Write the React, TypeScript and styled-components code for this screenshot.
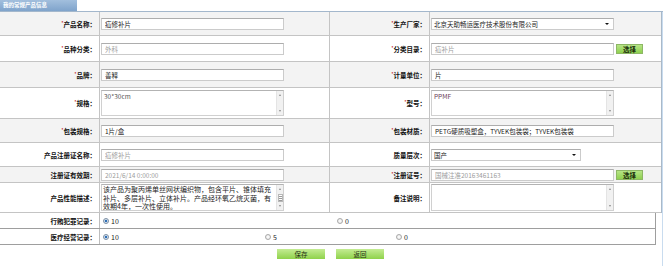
import React from "react";
import styled, { createGlobalStyle } from "styled-components";

const GlobalStyle = createGlobalStyle`
  html, body {
    margin: 0;
    padding: 0;
    background: #fff;
  }
  body {
    font-family: "Noto Sans CJK SC", "Liberation Sans", sans-serif;
  }
`;

const Page = styled.div`
  width: 663px;
  height: 266px;
  overflow: hidden;
`;

const TitleBar = styled.div`
  height: 11px;
  border-bottom: 1px solid #a3b7cc;
  display: flex;
`;

const TitleTab = styled.div`
  width: 77px;
  height: 11px;
  box-sizing: border-box;
  padding-left: 3px;
  background: linear-gradient(#a2bfdd, #7fa3cb);
  color: #fff;
  font-size: 5.5px;
  font-weight: bold;
  line-height: 11px;
  white-space: nowrap;
`;

const Body = styled.div`
  width: 663px;
  height: 254px;
  box-sizing: border-box;
  border-right: 1px solid #c9dcef;
`;

const FormTable = styled.div`
  width: 662px;
  box-sizing: border-box;
  border-right: 1px solid #a9b9c9;
`;

const FormRow = styled.div<{ $h: number; $shade?: boolean }>`
  display: grid;
  grid-template-columns: 100px 230px 100px 1fr;
  height: ${(p) => p.$h}px;
  box-sizing: border-box;
  background: ${(p) => (p.$shade ? "#f3f3f3" : "#fff")};
  border-bottom: 1px solid #c4c4c4;
`;

const LabelCell = styled.div`
  display: flex;
  align-items: center;
  justify-content: flex-end;
  padding-right: 3px;
  border-right: 1px solid #c4c4c4;
  font-size: 6.5px;
  font-weight: bold;
  color: #111;
  white-space: nowrap;
`;

const Star = styled.span`
  color: #b00;
  font-size: 5px;
  font-weight: normal;
  vertical-align: 2px;
`;

const FieldCell = styled.div<{ $last?: boolean }>`
  display: flex;
  align-items: center;
  gap: 2px;
  padding-left: 1px;
  border-right: ${(p) => (p.$last ? "none" : "1px solid #c4c4c4")};
`;

const TextInput = styled.input<{ $muted?: boolean; $w?: number }>`
  width: ${(p) => p.$w ?? 183}px;
  height: 12px;
  box-sizing: border-box;
  margin: 0;
  padding: 0 3px;
  border: 1px solid #cbcbcb;
  border-top-color: #adadad;
  background: #fff;
  font-family: inherit;
  font-size: 6.5px;
  color: ${(p) => (p.$muted ? "#9c9c9c" : "#222")};
  outline: none;
`;

const SelectBox = styled.div<{ $w: number }>`
  width: ${(p) => p.$w}px;
  height: 12px;
  box-sizing: border-box;
  display: flex;
  align-items: center;
  border: 1px solid #cbcbcb;
  border-top-color: #adadad;
  background: #fff;
`;

const SelectField = styled.select`
  flex: 1;
  min-width: 0;
  height: 10px;
  margin: 0;
  padding: 0 0 0 2px;
  border: none;
  background: transparent;
  appearance: none;
  font-family: inherit;
  font-size: 6.5px;
  color: #222;
  outline: none;
`;

const Caret = styled.span`
  width: 0;
  height: 0;
  margin-right: 4px;
  border-left: 2px solid transparent;
  border-right: 2px solid transparent;
  border-top: 2px solid #111;
`;

const PickButton = styled.button`
  width: 27px;
  height: 10px;
  margin: 0;
  padding: 0;
  border: 1px solid #8db765;
  background: linear-gradient(#b6e486, #8fd050);
  font-family: inherit;
  font-size: 6.5px;
  font-weight: bold;
  line-height: 8px;
  color: #1c2f0c;
`;

const AreaBox = styled.div<{ $h: number }>`
  width: 183px;
  height: ${(p) => p.$h}px;
  box-sizing: border-box;
  display: flex;
  border: 1px solid #d0d0d0;
  border-top-color: #b3b3b3;
  background: #fff;
`;

const AreaField = styled.textarea<{ $color?: string }>`
  flex: 1;
  min-width: 0;
  margin: 0;
  padding: 1px 1px 0 2px;
  border: none;
  resize: none;
  overflow: hidden;
  background: transparent;
  font-family: inherit;
  font-size: 6.5px;
  line-height: 8.5px;
  color: ${(p) => p.$color ?? "#333"};
  outline: none;
`;

const DescField = styled(AreaField)`
  font-size: 7px;
  line-height: 8.5px;
  color: #222;
  padding: 0 1px 0 1px;
`;

const ScrollTrack = styled.div`
  width: 7px;
  display: flex;
  flex-direction: column;
  align-items: center;
  justify-content: space-between;
  padding: 3px 0;
  box-sizing: border-box;
  background: #f1f1f1;
  border-left: 1px solid #e4e4e4;
`;

const Arrow = styled.span<{ $up?: boolean }>`
  width: 0;
  height: 0;
  border-left: 1.5px solid transparent;
  border-right: 1.5px solid transparent;
  ${(p) =>
    p.$up ? "border-bottom: 2px solid #8a8a8a;" : "border-top: 2px solid #8a8a8a;"}
`;

const Thumb = styled.span`
  width: 5px;
  height: 8px;
  box-sizing: border-box;
  border: 1px solid #b8b8b8;
  background: repeating-linear-gradient(#fff 0 1px, #9a9a9a 1px 2px);
`;

const RadioTable = styled.div`
  width: 656px;
  box-sizing: border-box;
  border-right: 1px solid #9e9e9e;
`;

const RadioRow = styled.div`
  display: grid;
  grid-template-columns: 100px 1fr;
  height: 16px;
  box-sizing: border-box;
  border-bottom: 1px solid #9e9e9e;
`;

const RadioLabel = styled(LabelCell)`
  border-right-color: #bdbdbd;
`;

const Options = styled.div`
  display: flex;
  align-items: center;
  padding-left: 3px;
`;

const Option = styled.label<{ $w?: number }>`
  display: flex;
  align-items: center;
  gap: 2px;
  width: ${(p) => (p.$w ? `${p.$w}px` : "auto")};
  font-size: 7px;
  color: #222;
`;

const Radio = styled.input`
  appearance: none;
  width: 6px;
  height: 6px;
  margin: 0;
  border-radius: 50%;
  border: 1px solid #a9a9a9;
  background: radial-gradient(circle, #fff 0, #e3e3e3 100%);
  &:checked {
    border-color: #7c8fa4;
    background: radial-gradient(circle, #2d6fb8 0 1.3px, #dbe6f2 1.6px);
  }
`;

const ButtonBar = styled.div`
  display: flex;
  justify-content: center;
  gap: 11px;
  margin-top: 4px;
  padding-right: 1px;
`;

const ActionButton = styled.button`
  width: 48px;
  height: 10px;
  margin: 0;
  padding: 0;
  border: none;
  background: linear-gradient(#c4ec93, #8fd24b);
  font-family: inherit;
  font-size: 6.5px;
  line-height: 10px;
  color: #1e2a12;
`;

const Label: React.FC<{ text: string; req?: boolean }> = ({ text, req }) => (
  <LabelCell>
    <span>
      {req && <Star>*</Star>}
      {text}
    </span>
  </LabelCell>
);

const Scroll: React.FC<{ thumb?: boolean }> = ({ thumb }) => (
  <ScrollTrack>
    <Arrow $up />
    {thumb && <Thumb />}
    <Arrow />
  </ScrollTrack>
);

const desc =
  "该产品为聚丙烯单丝网状编织物，包含平片、锥体填充补片、多层补片、立体补片。产品经环氧乙烷灭菌，有效期4年，一次性使用。";

export default function App() {
  return (
    <Page>
      <GlobalStyle />
      <TitleBar>
        <TitleTab>我的常规产品信息</TitleTab>
      </TitleBar>
      <Body>
        <FormTable>
          <FormRow $h={24} $shade>
            <Label text="产品名称：" req />
            <FieldCell>
              <TextInput defaultValue="疝修补片" />
            </FieldCell>
            <Label text="生产厂家：" req />
            <FieldCell $last>
              <SelectBox $w={183}>
                <SelectField defaultValue="a">
                  <option value="a">北京天助畅运医疗技术股份有限公司</option>
                </SelectField>
                <Caret />
              </SelectBox>
            </FieldCell>
          </FormRow>
          <FormRow $h={26}>
            <Label text="品种分类：" req />
            <FieldCell>
              <TextInput $muted readOnly defaultValue="外科" />
            </FieldCell>
            <Label text="分类目录：" req />
            <FieldCell $last>
              <TextInput $muted readOnly defaultValue="疝补片" />
              <PickButton>选择</PickButton>
            </FieldCell>
          </FormRow>
          <FormRow $h={26} $shade>
            <Label text="品牌：" req />
            <FieldCell>
              <TextInput defaultValue="善释" />
            </FieldCell>
            <Label text="计量单位：" req />
            <FieldCell $last>
              <TextInput defaultValue="片" />
            </FieldCell>
          </FormRow>
          <FormRow $h={31}>
            <Label text="规格：" req />
            <FieldCell>
              <AreaBox $h={26}>
                <AreaField $color="#555" defaultValue="30*30cm" />
                <Scroll />
              </AreaBox>
            </FieldCell>
            <Label text="型号：" req />
            <FieldCell $last>
              <AreaBox $h={26}>
                <AreaField $color="#6b3d55" defaultValue="PPMF" />
                <Scroll />
              </AreaBox>
            </FieldCell>
          </FormRow>
          <FormRow $h={24} $shade>
            <Label text="包装规格：" req />
            <FieldCell>
              <TextInput defaultValue="1片/盒" />
            </FieldCell>
            <Label text="包装材质：" req />
            <FieldCell $last>
              <TextInput defaultValue="PETG硬质吸塑盒，TYVEK包装袋；TYVEK包装袋" />
            </FieldCell>
          </FormRow>
          <FormRow $h={24}>
            <Label text="产品注册证名称：" />
            <FieldCell>
              <TextInput $muted readOnly defaultValue="疝修补片" />
            </FieldCell>
            <Label text="质量层次：" />
            <FieldCell $last>
              <SelectBox $w={150}>
                <SelectField defaultValue="gc">
                  <option value="gc">国产</option>
                </SelectField>
                <Caret />
              </SelectBox>
            </FieldCell>
          </FormRow>
          <FormRow $h={16} $shade>
            <Label text="注册证有效期：" />
            <FieldCell>
              <TextInput $muted readOnly defaultValue="2021/6/14 0:00:00" />
            </FieldCell>
            <Label text="注册证号：" req />
            <FieldCell $last>
              <TextInput $muted readOnly defaultValue="国械注准20163461163" />
              <PickButton>选择</PickButton>
            </FieldCell>
          </FormRow>
          <FormRow $h={30}>
            <Label text="产品性能描述：" />
            <FieldCell>
              <AreaBox $h={27}>
                <DescField defaultValue={desc} />
                <Scroll thumb />
              </AreaBox>
            </FieldCell>
            <Label text="备注说明：" />
            <FieldCell $last>
              <AreaBox $h={27}>
                <AreaField />
                <Scroll />
              </AreaBox>
            </FieldCell>
          </FormRow>
        </FormTable>
        <RadioTable>
          <RadioRow>
            <RadioLabel>行贿犯罪记录：</RadioLabel>
            <Options>
              <Option $w={234}>
                <Radio type="radio" name="bribe" defaultChecked />
                10
              </Option>
              <Option>
                <Radio type="radio" name="bribe" />0
              </Option>
            </Options>
          </RadioRow>
          <RadioRow>
            <RadioLabel>医疗经营记录：</RadioLabel>
            <Options>
              <Option $w={162}>
                <Radio type="radio" name="med" defaultChecked />
                10
              </Option>
              <Option $w={131}>
                <Radio type="radio" name="med" />5
              </Option>
              <Option>
                <Radio type="radio" name="med" />0
              </Option>
            </Options>
          </RadioRow>
        </RadioTable>
        <ButtonBar>
          <ActionButton>保存</ActionButton>
          <ActionButton>返回</ActionButton>
        </ButtonBar>
      </Body>
    </Page>
  );
}
